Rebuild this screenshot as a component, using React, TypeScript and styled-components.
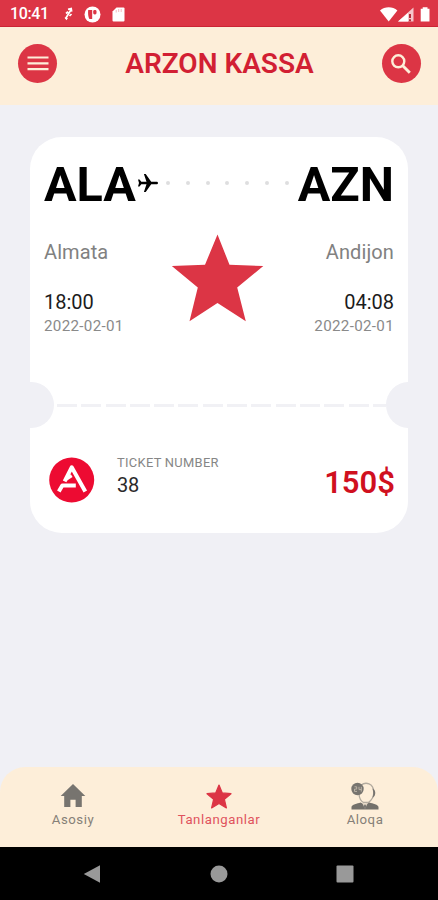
import React from 'react';
import styled, { createGlobalStyle } from 'styled-components';

const RED = '#dc3545';

const GlobalStyle = createGlobalStyle`
  * { box-sizing: border-box; }
  body { margin: 0; background: #f0f0f5; font-family: Roboto, 'Liberation Sans', sans-serif; }
  svg { display: block; }
`;

const Screen = styled.div`
  width: 438px;
  height: 900px;
  display: flex;
  flex-direction: column;
  background: #f0f0f5;
  overflow: hidden;
`;

const StatusBar = styled.div`
  height: 27px;
  flex: none;
  display: flex;
  align-items: center;
  justify-content: space-between;
  padding: 2px 6px 0 10px;
  background: ${RED};
  border-bottom: 1px solid #cb2435;
  color: #fff;
`;

const StatusGroup = styled.div<{ $gap: number }>`
  display: flex;
  align-items: center;
  gap: ${(p) => p.$gap}px;
`;

const Clock = styled.span`
  width: 43px;
  font-size: 16px;
  font-weight: 500;
  letter-spacing: -0.4px;
  line-height: 20px;
`;

const Header = styled.header`
  height: 78px;
  flex: none;
  display: flex;
  align-items: center;
  justify-content: space-between;
  padding: 0 17px 5px 18px;
  background: #fdeed9;
`;

const RoundButton = styled.button`
  width: 39px;
  height: 39px;
  padding: 0;
  border: 0;
  border-radius: 50%;
  display: grid;
  place-items: center;
  background: ${RED};
`;

const Title = styled.h1`
  margin: 0;
  font-size: 28px;
  font-weight: 600;
  line-height: 34px;
  letter-spacing: 0;
  color: #d21f33;
  white-space: nowrap;
`;

const Main = styled.main`
  flex: 1;
  padding: 32px 30px 0;
`;

const Ticket = styled.article`
  height: 396px;
  display: flex;
  flex-direction: column;
  border-radius: 32px;
  background: #fff;
  overflow: hidden;
`;

const Route = styled.div`
  height: 64px;
  margin-top: 16px;
  padding: 0 14px;
  display: flex;
  align-items: center;
`;

const Code = styled.span`
  font-size: 48.500px;
  font-weight: 700;
  line-height: 64px;
  color: #000;
`;

const Dots = styled.div`
  flex: 1;
  display: flex;
  align-items: center;
  justify-content: space-between;
  padding: 0 9px 4px 7px;
`;

const Dot = styled.i`
  width: 4px;
  height: 4px;
  border-radius: 50%;
  background: #dededf;
`;

const PlaneBox = styled.div`
  padding: 0 0 4px 1px;
`;

const Details = styled.div`
  height: 164px;
  padding: 0 14px;
  display: grid;
  grid-template-columns: 110px 1fr 110px;
`;

const Stop = styled.div<{ $end?: boolean }>`
  display: flex;
  flex-direction: column;
  padding-top: 22px;
  text-align: ${(p) => (p.$end ? 'right' : 'left')};
`;

const City = styled.span`
  font-size: 20px;
  line-height: 26px;
  letter-spacing: 0.1px;
  color: #818181;
`;

const Time = styled.span`
  margin-top: 24px;
  font-size: 20px;
  line-height: 26px;
  color: #1c1c1c;
`;

const Day = styled.span`
  font-size: 15.200px;
  line-height: 22px;
  letter-spacing: 0.3px;
  color: #8a8a8a;
`;

const StarBox = styled.div`
  display: flex;
  justify-content: center;
  padding: 17px 3px 0 0;
`;

const Tear = styled.div`
  height: 46px;
  margin: 1px -23px 0 -21px;
  display: flex;
  align-items: center;
`;

const Notch = styled.div`
  width: 45px;
  height: 46px;
  flex: none;
  border-radius: 50%;
  background: #f0f0f5;
`;

const Perforation = styled.div`
  flex: 1;
  height: 3px;
  margin-left: 3px;
  background: repeating-linear-gradient(90deg, #f1f1f5 0 20px, #fff 20px 24.3px);
`;

const Footer = styled.div`
  flex: 1;
  padding: 0 13px 0 19px;
  display: flex;
  align-items: flex-start;
`;

const LogoBox = styled.div`
  margin-top: 29px;
`;

const NumberBlock = styled.div`
  flex: 1;
  display: flex;
  flex-direction: column;
  margin: 25px 0 0 22px;
`;

const Caption = styled.span`
  font-size: 12.900px;
  line-height: 19px;
  letter-spacing: 0.3px;
  color: #868686;
`;

const TicketNumber = styled.span`
  font-size: 20px;
  line-height: 26px;
  letter-spacing: -0.2px;
  color: #2a2a2a;
`;

const Price = styled.span`
  margin-top: 36px;
  font-size: 31px;
  font-weight: 600;
  line-height: 38px;
  color: #d0101f;
`;

const TabBar = styled.nav`
  height: 80px;
  flex: none;
  display: grid;
  grid-template-columns: repeat(3, 1fr);
  border-radius: 25px 25px 0 0;
  background: #fdeed9;
`;

const Tab = styled.div<{ $active?: boolean }>`
  display: flex;
  flex-direction: column;
  align-items: center;
  padding-top: 14px;
  font-size: 13.200px;
  letter-spacing: 0.550px;
  line-height: 17px;
  color: ${(p) => (p.$active ? '#e0525d' : '#858078')};
`;

const TabIcon = styled.div`
  height: 30px;
  display: grid;
  place-items: center;
`;

const SystemBar = styled.div`
  height: 53px;
  flex: none;
  display: flex;
  align-items: center;
  justify-content: space-between;
  padding: 0 84px 0 83px;
  background: #000;
`;

const MenuIcon = () => (
  <svg width="22" height="17" viewBox="0 0 22 17" stroke="#fdeed9" strokeWidth="2.2">
    <path d="M.5 2.5h21M.5 8.3h21M.5 14.1h21" />
  </svg>
);

const SearchIcon = () => (
  <svg width="22" height="22" viewBox="0 0 22 22" fill="none" stroke="#fdeed9">
    <circle cx="8.3" cy="8.3" r="6" strokeWidth="2.4" />
    <path d="M12.8 12.8l7 7" strokeWidth="2.9" />
  </svg>
);

const NoteIcon = () => (
  <svg width="9" height="14" viewBox="0 0 9 14" fill="none" stroke="#fff" strokeWidth="1.7">
    <path d="M1.5 11.8l5.8-9.6M4 2.3l3.2-.7.5 3M2 6.5l2-1.8M5.5 9l2-2" />
    <path d="M.5 10.5l3.5.4-1.5 2.4z" fill="#fff" stroke="none" />
  </svg>
);

const PocketIcon = () => (
  <svg width="17" height="17" viewBox="0 0 17 17">
    <circle cx="8.5" cy="8.5" r="8" fill="#fff" />
    <path d="M4.2 4h4v9H5.4C4.2 11 3.800 7 4.200 4z" fill={RED} />
    <rect x="9.2" y="4" width="3.3" height="4.5" rx="1.4" fill={RED} />
  </svg>
);

const SdIcon = () => (
  <svg width="13" height="15" viewBox="0 0 13 15">
    <path d="M4.5.5h7a1 1 0 0 1 1 1v12a1 1 0 0 1-1 1h-10a1 1 0 0 1-1-1v-9z" fill="#fff" />
    <path d="M4.2 3v2.500M6.700 2v3M9.200 2v3" stroke="#f4b9bf" />
  </svg>
);

const SignalIcons = () => (
  <svg width="52" height="17" viewBox="0 0 52 17" fill="#fff">
    <path d="M0 4.4C4.8.1 12.6.1 17.4 4.4L8.7 15.5z" />
    <path d="M33.5 1.5v14H18z" opacity=".72" />
    <path d="M28 7v8.5H18z" />
    <path d="M29 8h2v4h-2zM29 13.2h2v2h-2z" fill="#b62c3a" />
    <path d="M42.7 1.2h4.8v1.5h2v12.8h-8.8V2.7h2z" />
  </svg>
);

const PlaneIcon = () => (
  <svg width="22" height="22" viewBox="0 0 22 22" fill="#000">
    <path d="M21 11c0-.9-.7-1.3-1.6-1.3h-5.2L8.7 2H6.9l2.6 7.7H4.3L2.5 7.5H1L2 11l-1 3.5h1.5l1.8-2.2h5.2L6.900 20h1.800l5.500-7.700h5.200c.9 0 1.600-.4 1.600-1.300z" />
  </svg>
);

const StarIcon = () => (
  <svg width="93" height="90" viewBox="0 0 93 90" fill={RED}>
    <path d="M46.500 .5L58.500 30.800L92.300 32L66.200 53.500L74.800 87.300L46.500 69L18.500 87.300L26.800 53.500L.8 32L34 30.800z" />
  </svg>
);

const LogoIcon = () => (
  <svg width="46" height="46" viewBox="0 0 46 46">
    <circle cx="22.700" cy="23" r="22.500" fill="#ed0b32" />
    <g fill="none" stroke="#fff" strokeWidth="4" strokeLinejoin="round">
      <path d="M15.600 24.300L22.700 10.300L36.300 34.500" />
      <path d="M9.800 34.500L13.300 28.500H26.800" />
      <path d="M16.500 22.500l6.200-3.800" strokeWidth="3.300" />
    </g>
  </svg>
);

const HomeIcon = () => (
  <svg width="26" height="24" viewBox="0 0 26 24" fill="#77746f">
    <path d="M13 0L25.300 12h-3.500v11h-6.200v-7.200h-5.200V23H4.200V12H.7z" />
  </svg>
);

const FavoriteIcon = () => (
  <svg width="26" height="25" viewBox="0 0 26 25" fill={RED} stroke={RED} strokeWidth="1.200" strokeLinejoin="round">
    <path d="M13 1l3.300 7.900 8.700.800-6.600 5.700 2 8.500-7.400-4.500-7.400 4.500 2-8.500L1 9.700l8.700-.8z" />
  </svg>
);

const ContactIcon = () => (
  <svg width="28" height="28" viewBox="0 0 28 28">
    <path d="M10 3.200C14.500-.5 22.500 1 22.800 10c.2 5-2.600 8.500-5.400 10.500h-5C9.800 19 8.300 16 8 12" fill="none" stroke="#b3ab9f" strokeWidth="1.300" />
    <path d="M21.500 6.500c2.600 1 3.600 4.500 2 7.500l-2 1.800c1-3 1.100-6 0-9.300z" fill="#77746f" />
    <path d="M.5 27.500V25c0-2.500 6-3.300 9-4.500l4.500 2.300 4.500-2.300c3 1.200 9 2 9 4.500v2.500z" fill="#74716b" />
    <path d="M11 20.500l3 6.500 3-6.500-3 2z" fill="#ddd2c1" />
    <path d="M14 22.500l1.200 1.200-.7 3.300h-1l-.7-3.300z" fill="#77746f" />
    <circle cx="6.500" cy="7" r="6.200" fill="#77746f" />
    <path d="M3.500 4.800h2.200v2.300H3.500v2.300h2.500M8 4.800v2.800h2.300M10.300 4.800v4.800" fill="none" stroke="#c2b9ab" strokeWidth=".9" />
  </svg>
);

const BackIcon = () => (
  <svg width="18" height="20" viewBox="0 0 18 20" fill="#999">
    <path d="M17 1.300v17.400L.8 10z" />
  </svg>
);

const HomeButtonIcon = () => (
  <svg width="18" height="18" viewBox="0 0 18 18" fill="#999">
    <circle cx="9" cy="9" r="8.500" />
  </svg>
);

const RecentsIcon = () => (
  <svg width="18" height="18" viewBox="0 0 18 18" fill="#999">
    <rect x=".5" y=".5" width="17" height="17" rx="1" />
  </svg>
);

export default function App() {
  return (
    <>
      <GlobalStyle />
      <Screen>
        <StatusBar>
          <StatusGroup $gap={11}>
            <Clock>10:41</Clock>
            <NoteIcon />
            <PocketIcon />
            <SdIcon />
          </StatusGroup>
          <SignalIcons />
        </StatusBar>
        <Header>
          <RoundButton aria-label="Menu"><MenuIcon /></RoundButton>
          <Title>ARZON KASSA</Title>
          <RoundButton aria-label="Search"><SearchIcon /></RoundButton>
        </Header>
        <Main>
          <Ticket>
            <Route>
              <Code>ALA</Code>
              <PlaneBox><PlaneIcon /></PlaneBox>
              <Dots>
                {Array.from({ length: 7 }, (_, i) => <Dot key={i} />)}
              </Dots>
              <Code>AZN</Code>
            </Route>
            <Details>
              <Stop>
                <City>Almata</City>
                <Time>18:00</Time>
                <Day>2022-02-01</Day>
              </Stop>
              <StarBox><StarIcon /></StarBox>
              <Stop $end>
                <City>Andijon</City>
                <Time>04:08</Time>
                <Day>2022-02-01</Day>
              </Stop>
            </Details>
            <Tear>
              <Notch />
              <Perforation />
              <Notch />
            </Tear>
            <Footer>
              <LogoBox><LogoIcon /></LogoBox>
              <NumberBlock>
                <Caption>TICKET NUMBER</Caption>
                <TicketNumber>38</TicketNumber>
              </NumberBlock>
              <Price>150$</Price>
            </Footer>
          </Ticket>
        </Main>
        <TabBar>
          <Tab>
            <TabIcon><HomeIcon /></TabIcon>
            Asosiy
          </Tab>
          <Tab $active>
            <TabIcon><FavoriteIcon /></TabIcon>
            Tanlanganlar
          </Tab>
          <Tab>
            <TabIcon><ContactIcon /></TabIcon>
            Aloqa
          </Tab>
        </TabBar>
        <SystemBar>
          <BackIcon />
          <HomeButtonIcon />
          <RecentsIcon />
        </SystemBar>
      </Screen>
    </>
  );
}
